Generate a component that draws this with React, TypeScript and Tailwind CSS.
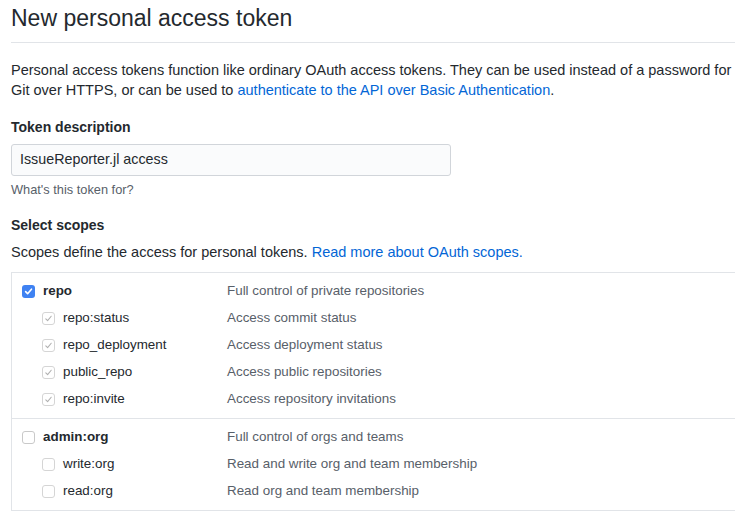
import React from "react";

const font = { fontFamily: '"Liberation Sans", Arial, Helvetica, sans-serif' };

function MainCheck({ checked }: { checked: boolean }) {
  if (checked) {
    return (
      <span className="flex h-[13px] w-[13px] shrink-0 items-center justify-center rounded-[3px] bg-[#3f82f2]">
        <svg width="9" height="9" viewBox="0 0 10 10">
          <path d="M1.8 5.2 L4 7.4 L8.3 2.4" fill="none" stroke="#fff" strokeWidth="1.8" strokeLinecap="round" strokeLinejoin="round" />
        </svg>
      </span>
    );
  }
  return <span className="h-[13px] w-[13px] shrink-0 rounded-[3px] border border-[#c9c9c9] bg-white" />;
}

function SubCheck({ checked }: { checked: boolean }) {
  return (
    <span className="flex h-[13px] w-[13px] shrink-0 items-center justify-center rounded-[3px] border border-[#d5d5d5] bg-white">
      {checked && (
        <svg width="9" height="9" viewBox="0 0 10 10">
          <path d="M2 5.3 L4 7.3 L8 2.5" fill="none" stroke="#b0b0b0" strokeWidth="1.2" strokeLinecap="round" strokeLinejoin="round" />
        </svg>
      )}
    </span>
  );
}

type Scope = { name: string; desc: string; checked: boolean; children: { name: string; desc: string }[] };

const scopes: Scope[] = [
  {
    name: "repo",
    desc: "Full control of private repositories",
    checked: true,
    children: [
      { name: "repo:status", desc: "Access commit status" },
      { name: "repo_deployment", desc: "Access deployment status" },
      { name: "public_repo", desc: "Access public repositories" },
      { name: "repo:invite", desc: "Access repository invitations" },
    ],
  },
  {
    name: "admin:org",
    desc: "Full control of orgs and teams",
    checked: false,
    children: [
      { name: "write:org", desc: "Read and write org and team membership" },
      { name: "read:org", desc: "Read org and team membership" },
    ],
  },
];

export default function App() {
  return (
    <div className="min-h-[514px] w-[735px] overflow-hidden bg-white pl-[11px] text-[#24292e]" style={font}>
      <div className="border-b border-[#e1e4e8] pt-[3px] pb-[9px]">
        <h1 className="text-[23px] font-normal leading-[30px] text-[#24292e]">New personal access token</h1>
      </div>

      <p className="mt-[17px] text-[14.5px] leading-[20px]">
        Personal access tokens function like ordinary OAuth access tokens. They can be used instead of a password for Git over
        HTTPS, or can be used to <span className="text-[#0366d6]">authenticate to the API over Basic Authentication</span>.
      </p>

      <div className="mt-[17px] text-[14px] font-bold leading-[20px]">Token description</div>
      <div className="mt-[7px] flex h-[32px] w-[440px] items-center rounded-[3px] border border-[#d1d5da] bg-[#fafbfc] px-[8px] text-[14.3px]">
        IssueReporter.jl access
      </div>
      <div className="mt-[5px] text-[12.8px] leading-[18px] text-[#586069]">What's this token for?</div>

      <div className="mt-[16px] text-[14px] font-bold leading-[20px]">Select scopes</div>
      <p className="mt-[7px] text-[14.5px] leading-[20px]">
        Scopes define the access for personal tokens. <span className="text-[#0366d6]">Read more about OAuth scopes.</span>
      </p>

      <div className="mt-[10px] border-t border-l border-[#e1e4e8]">
        {scopes.map((s) => (
          <div key={s.name} className="border-b border-[#e1e4e8] py-[5px]">
            <div className="flex h-[27px] items-center text-[13.4px]">
              <div className="flex w-[215px] items-center gap-[8px] pl-[10px]">
                <MainCheck checked={s.checked} />
                <span className="font-bold">{s.name}</span>
              </div>
              <span className="text-[#586069]">{s.desc}</span>
            </div>
            {s.children.map((c) => (
              <div key={c.name} className="flex h-[27px] items-center text-[13.4px]">
                <div className="flex w-[215px] items-center gap-[8px] pl-[30px]">
                  <SubCheck checked={s.checked} />
                  <span>{c.name}</span>
                </div>
                <span className="text-[#586069]">{c.desc}</span>
              </div>
            ))}
          </div>
        ))}
      </div>
    </div>
  );
}
